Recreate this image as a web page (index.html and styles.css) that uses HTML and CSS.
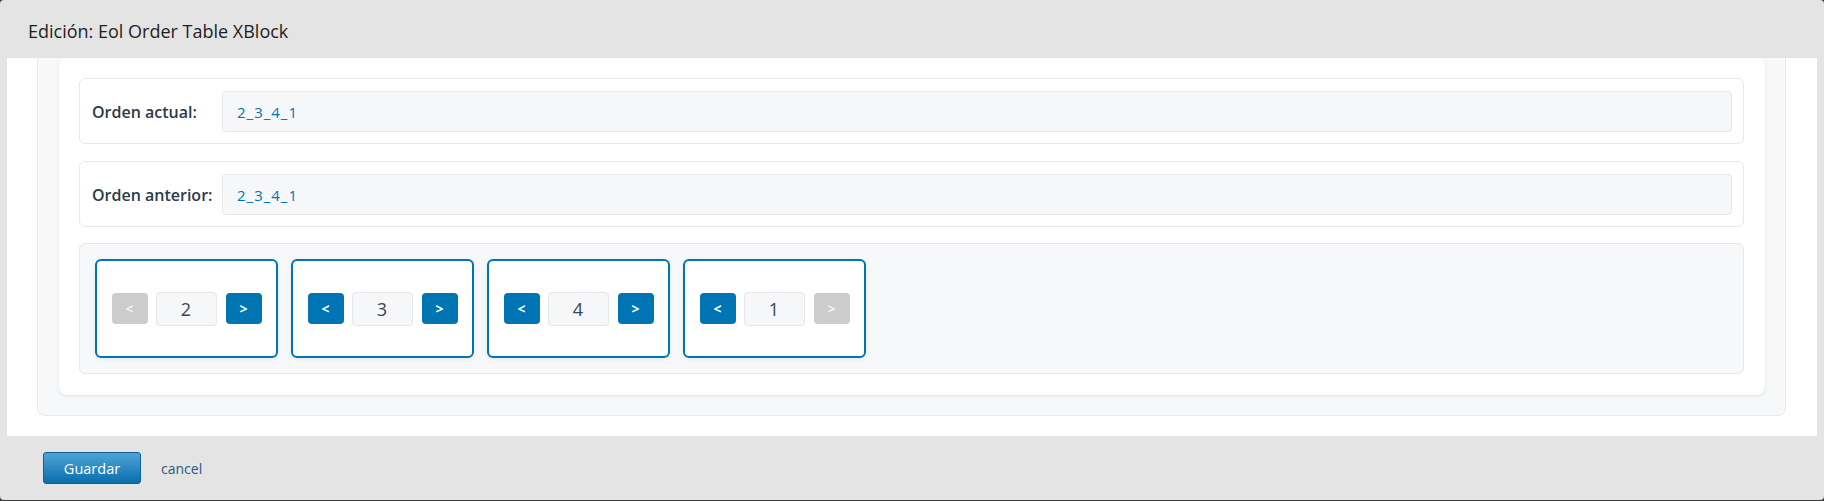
FILE: index.html
```html
<!DOCTYPE html>
<html lang="es">
<head>
<meta charset="utf-8">
<title>Edición: Eol Order Table XBlock</title>
<link rel="stylesheet" href="styles.css">
</head>
<body>
<div class="modal">
  <div class="modal-header">
    <h2 class="modal-title">Edición: Eol Order Table XBlock</h2>
  </div>
  <div class="modal-body">
    <div class="outer">
      <div class="card">
        <div class="row-card">
          <span class="row-label">Orden actual:</span>
          <div class="row-value">2_3_4_1</div>
        </div>
        <div class="row-card">
          <span class="row-label">Orden anterior:</span>
          <div class="row-value">2_3_4_1</div>
        </div>
        <div class="pager">
          <div class="item">
            <button class="arrow disabled">&lt;</button>
            <span class="num">2</span>
            <button class="arrow">&gt;</button>
          </div>
          <div class="item">
            <button class="arrow">&lt;</button>
            <span class="num">3</span>
            <button class="arrow">&gt;</button>
          </div>
          <div class="item">
            <button class="arrow">&lt;</button>
            <span class="num">4</span>
            <button class="arrow">&gt;</button>
          </div>
          <div class="item">
            <button class="arrow">&lt;</button>
            <span class="num">1</span>
            <button class="arrow disabled">&gt;</button>
          </div>
        </div>
      </div>
    </div>
  </div>
  <div class="modal-footer">
    <button class="save">Guardar</button>
    <a class="cancel" href="#">cancel</a>
  </div>
</div>
</body>
</html>
```

FILE: styles.css
```css
* { box-sizing: border-box; }

html, body {
  margin: 0;
  height: 100%;
}

body {
  background: #3a3a3a;
  font-family: "Open Sans", "Noto Sans", "Liberation Sans", sans-serif;
  overflow: hidden;
}

.modal {
  height: 500px;
  background: #e4e4e4;
  border-radius: 4px;
  display: flex;
  flex-direction: column;
  overflow: hidden;
}

.modal-header {
  height: 58px;
  flex: none;
  display: flex;
  align-items: center;
  padding: 4px 0 0 28px;
}

.modal-title {
  margin: 0;
  font-size: 18px;
  font-weight: 400;
  color: #1e1e1e;
}

.modal-body {
  flex: none;
  height: 378px;
  margin: 0 7px;
  background: #ffffff;
  overflow: hidden;
  padding: 0 31px 0 30px;
}

.outer {
  margin-top: -21px;
  background: #f7f8fa;
  border: 1px solid #e8eaed;
  border-radius: 8px;
  padding: 20px 20px 20px 21px;
}

.card {
  background: #ffffff;
  border-radius: 8px;
  box-shadow: 0 1px 3px rgba(0, 0, 0, 0.1);
  padding: 20px 21px 21px 20px;
  display: flex;
  flex-direction: column;
  gap: 16px;
}

.row-card {
  display: flex;
  align-items: center;
  border: 1px solid #e6e9ec;
  border-radius: 6px;
  padding: 12px 11px 11px 12px;
  background: #ffffff;
}

.row-card + .row-card {
  margin-top: 1px;
}

.row-label {
  width: 118px;
  margin-right: 12px;
  flex: none;
  font-size: 16px;
  font-weight: 600;
  color: #2f3a48;
  white-space: nowrap;
}

.row-value {
  flex: 1;
  height: 41px;
  display: flex;
  align-items: center;
  padding: 0 13px 0 14px;
  background: #f6f7f9;
  border: 1px solid #e6e9ec;
  border-radius: 4px;
  font-size: 15px;
  letter-spacing: 1px;
  color: #0075b4;
}

.pager {
  display: flex;
  gap: 13px;
  padding: 15px;
  background: #f7f8fa;
  border: 1px solid #e4e7eb;
  border-radius: 6px;
}

.item {
  width: 183px;
  height: 99px;
  display: flex;
  align-items: center;
  justify-content: center;
  gap: 8px;
  background: #ffffff;
  border: 2px solid #0075b4;
  border-radius: 6px;
  box-shadow: 0 1px 4px rgba(0, 0, 0, 0.08);
}

.arrow {
  width: 36px;
  height: 31px;
  border: none;
  border-radius: 4px;
  background: #0075b4;
  color: #ffffff;
  font-family: "Open Sans", "Noto Sans", sans-serif;
  font-size: 14px;
  font-weight: 700;
  padding: 0;
}

.arrow.disabled {
  background: #cccccc;
  color: #f2f2f2;
}

.num {
  width: 61px;
  height: 34px;
  margin-right: 1px;
  display: flex;
  align-items: center;
  justify-content: center;
  background: #f6f7f9;
  border: 1px solid #e5e8eb;
  border-radius: 4px;
  font-size: 18px;
  color: #394555;
}

.modal-footer {
  flex: 1;
  display: flex;
  align-items: center;
  padding-left: 43px;
  gap: 20px;
}

.save {
  width: 98px;
  height: 32px;
  border: 1px solid #0b6198;
  border-radius: 3px;
  background: linear-gradient(to bottom, #4fa4d5, #0a6ead);
  color: #ffffff;
  font-family: "Open Sans", "Noto Sans", sans-serif;
  font-size: 14.5px;
  padding: 0;
}

.cancel {
  color: #245a86;
  font-size: 14px;
  text-decoration: none;
}
```
